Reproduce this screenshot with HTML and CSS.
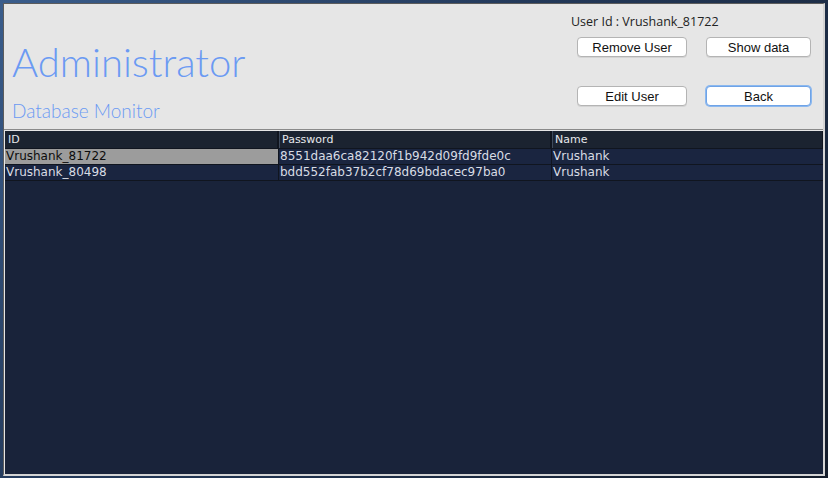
FILE: index.html
```html
<!DOCTYPE html>
<html>
<head>
<meta charset="utf-8">
<link rel="stylesheet" href="styles.css">
</head>
<body>
<div class="window">
  <div class="header">
    <div class="titles">
      <div class="title">Administrator</div>
      <div class="subtitle">Database Monitor</div>
    </div>
    <div class="controls">
      <div class="userid">User Id : Vrushank_81722</div>
      <div class="buttons">
        <button class="btn">Remove User</button>
        <button class="btn">Show data</button>
        <button class="btn">Edit User</button>
        <button class="btn focus">Back</button>
      </div>
    </div>
  </div>
  <div class="table">
    <div class="row head">
      <div class="cell c1">ID</div>
      <div class="cell c2">Password</div>
      <div class="cell c3">Name</div>
    </div>
    <div class="row">
      <div class="cell c1 sel">Vrushank_81722</div>
      <div class="cell c2">8551daa6ca82120f1b942d09fd9fde0c</div>
      <div class="cell c3">Vrushank</div>
    </div>
    <div class="row">
      <div class="cell c1">Vrushank_80498</div>
      <div class="cell c2">bdd552fab37b2cf78d69bdacec97ba0</div>
      <div class="cell c3">Vrushank</div>
    </div>
  </div>
</div>
</body>
</html>
```

FILE: styles.css
```css
html, body {
  margin: 0;
  padding: 0;
}
body {
  width: 828px;
  height: 478px;
  overflow: hidden;
  background: linear-gradient(135deg, #3a5d8c 0%, #23395a 40%, #141c2a 100%);
  padding: 3px 3px 2px 3px;
  box-sizing: border-box;
}
.window {
  height: 473px;
  box-sizing: border-box;
  border-top: 1px solid #5c5c5c;
  border-left: 1px solid #5c5c5c;
  border-right: 2px solid #d4d4d4;
  border-bottom: 2px solid #d4d4d4;
  background: #e6e6e6;
  display: flex;
  flex-direction: column;
}
.header {
  height: 126px;
  box-sizing: border-box;
  border-bottom: 1px solid #8a8a8a;
  display: flex;
  justify-content: space-between;
}
.titles {
  padding: 34px 0 0 8px;
  color: #6b9af3;
  font-family: "Lato", "Open Sans", sans-serif;
  font-weight: 300;
}
.title {
  font-size: 40px;
  line-height: 48px;
}
.subtitle {
  font-size: 19px;
  line-height: 22px;
  margin-top: 14px;
}
.controls {
  padding: 10px 12px 0 0;
  display: flex;
  flex-direction: column;
  align-items: flex-start;
}
.userid {
  font-family: "Open Sans", sans-serif;
  font-size: 12.5px;
  line-height: 16px;
  color: #222;
  margin-left: -6px;
}
.buttons {
  margin-top: 7px;
  display: grid;
  grid-template-columns: 110px 105px;
  column-gap: 19px;
  row-gap: 29px;
}
.btn {
  height: 20px;
  margin: 0;
  padding: 0;
  background: #fff;
  border: 1px solid #b4b4b4;
  border-radius: 4px;
  font-family: "Liberation Sans", Arial, sans-serif;
  font-size: 13px;
  color: #111;
  box-shadow: 0 1px 0 rgba(0,0,0,0.08);
}
.btn.focus {
  border: 1px solid #6fa3e6;
  box-shadow: 0 0 0 1px #8bb8ef;
}
.table {
  flex: 1;
  margin: 1px 0 0 1px;
  background: #19233a;
  font-family: "DejaVu Sans", sans-serif;
}
.row {
  display: flex;
  height: 15px;
  border-bottom: 1px solid #10151f;
}
.row.head {
  height: 17px;
  background: #1b2330;
}
.cell {
  box-sizing: border-box;
  padding-left: 1px;
  font-size: 12px;
  line-height: 15px;
  color: #d8dce4;
  background: #1a2540;
  white-space: nowrap;
  overflow: hidden;
}
.head .cell {
  background: #1b2330;
  font-size: 11px;
  line-height: 17px;
  color: #e6e8ec;
  padding-left: 3px;
  border-right: 1px solid #10151f;
  box-shadow: inset 1px 0 0 #3e4a5c;
}
.c1 { width: 273px; }
.c2 { width: 273px; border-left: 1px solid #10151f; }
.c3 { flex: 1; border-left: 1px solid #10151f; }
.head .c1 { box-shadow: none; }
.cell.sel {
  background: #9c9c9c;
  color: #0c0c0c;
}
```
